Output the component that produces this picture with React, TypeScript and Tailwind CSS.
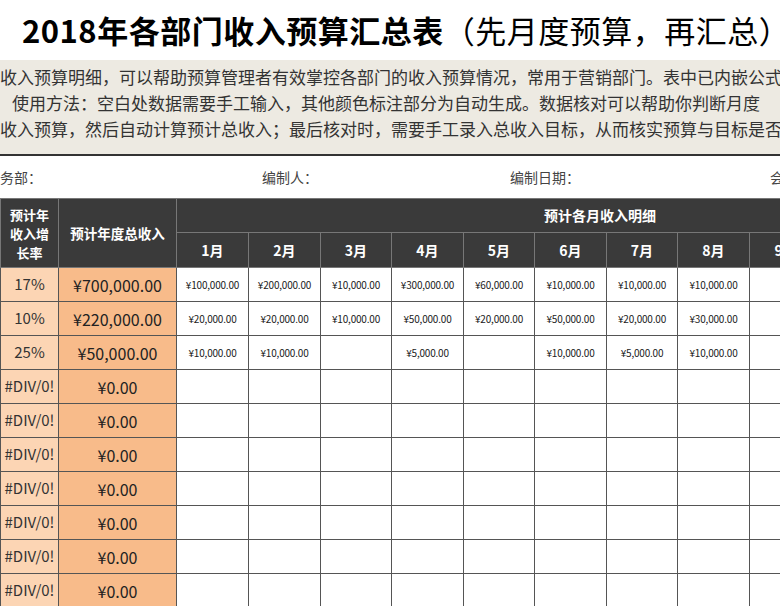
import React from "react";

const months = ["1月","2月","3月","4月","5月","6月","7月","8月","9月"];
const widths = [72,72,71,72,71,72,71,72,72];
const data: [string,string,string[]][] = [
  ["17%","¥700,000.00",["¥100,000.00","¥200,000.00","¥10,000.00","¥300,000.00","¥60,000.00","¥10,000.00","¥10,000.00","¥10,000.00",""]],
  ["10%","¥220,000.00",["¥20,000.00","¥20,000.00","¥10,000.00","¥50,000.00","¥20,000.00","¥50,000.00","¥20,000.00","¥30,000.00",""]],
  ["25%","¥50,000.00",["¥10,000.00","¥10,000.00","","¥5,000.00","","¥10,000.00","¥5,000.00","¥10,000.00",""]],
];
for (let i = 0; i < 7; i++) data.push(["#DIV/0!","¥0.00",["","","","","","","","",""]]);

const font = { fontFamily: '"Noto Sans CJK SC", "Noto Sans", sans-serif' };

export default function App() {
  return (
    <div className="w-[780px] h-[606px] overflow-hidden bg-white text-[#333]" style={font}>
      <div className="h-[60px] flex items-center pl-[22px] whitespace-nowrap">
        <span className="text-[31px] font-bold text-black tracking-[0.5px]">2018年各部门收入预算汇总表</span>
        <span className="text-[31px] text-black tracking-[0.5px]">（先月度预算，再汇总）</span>
      </div>
      <div className="h-[96px] bg-[#edeae2] border-b-2 border-[#333] pt-[4px] text-[17px] leading-[26px] whitespace-nowrap overflow-hidden">
        <div>收入预算明细，可以帮助预算管理者有效掌控各部门的收入预算情况，常用于营销部门。表中已内嵌公式</div>
        <div className="pl-[12px]">使用方法：空白处数据需要手工输入，其他颜色标注部分为自动生成。数据核对可以帮助你判断月度</div>
        <div>收入预算，然后自动计算预计总收入；最后核对时，需要手工录入总收入目标，从而核实预算与目标是否</div>
      </div>
      <div className="h-[42px] text-[14px] text-[#444] whitespace-nowrap relative">
        <span className="absolute left-0 top-[11px]">务部：</span>
        <span className="absolute left-[262px] top-[11px]">编制人：</span>
        <span className="absolute left-[510px] top-[11px]">编制日期：</span>
        <span className="absolute left-[770px] top-[11px]">会</span>
      </div>
      <table className="table-fixed border-collapse w-[821px]">
        <colgroup>
          <col style={{ width: 58 }} />
          <col style={{ width: 118 }} />
          {widths.map((w, i) => <col key={i} style={{ width: w }} />)}
        </colgroup>
        <thead className="bg-[#3a3a3a] text-white">
          <tr className="h-[34px]">
            <th rowSpan={2} className="border border-[#777] text-[13px] leading-[19px] font-bold">预计年<br/>收入增<br/>长率</th>
            <th rowSpan={2} className="border border-[#777] text-[13.5px] font-bold whitespace-nowrap">预计年度总收入</th>
            <th colSpan={9} className="border border-[#777] text-[14px] font-bold text-left pl-[367px]">预计各月收入明细</th>
          </tr>
          <tr className="h-[35px]">
            {months.map(m => <th key={m} className="border border-[#777] text-[14px] font-bold">{m}</th>)}
          </tr>
        </thead>
        <tbody>
          {data.map((r, i) => (
            <tr key={i} className="h-[34px]">
              <td className="border border-[#555] bg-[#fcd5b4] text-center text-[15px] text-[#333] whitespace-nowrap overflow-hidden">{r[0]}</td>
              <td className="border border-[#555] bg-[#f8bb8a] text-center text-[16px] text-[#222]">{r[1]}</td>
              {r[2].map((v, j) => (
                <td key={j} className="border border-[#555] text-center text-[10px] tracking-[-0.2px] text-[#222] whitespace-nowrap overflow-hidden">{v}</td>
              ))}
            </tr>
          ))}
        </tbody>
      </table>
    </div>
  );
}
